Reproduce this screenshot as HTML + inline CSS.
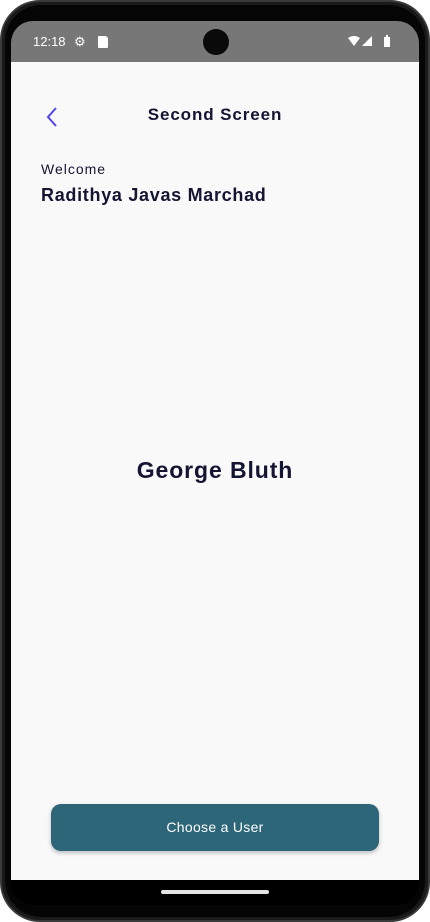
<!DOCTYPE html>
<html><head><style>
*{margin:0;padding:0;box-sizing:border-box}
body{width:430px;height:922px;background:#fff;position:relative;overflow:hidden;font-family:"Liberation Sans",sans-serif}
.phone{position:absolute;left:0;top:0;width:430px;height:922px;background:#1a1a1a;border-radius:40px;border:2px solid #3a3a3a}
.inner{position:absolute;left:5px;top:5px;width:420px;height:912px;background:#050505;border-radius:36px}
.screen{position:absolute;left:11px;top:21px;width:408px;height:884px;border-radius:22px;overflow:hidden;background:#000}
.status{position:absolute;left:0;top:0;width:408px;height:41px;background:#777}
.content{position:absolute;left:0;top:41px;width:408px;height:818px;background:#f9f9f9}
.cam{position:absolute;left:192px;top:8px;width:26px;height:26px;border-radius:50%;background:#0a0a0a}
.st{position:absolute;color:#fff;font-size:13px;top:13px}
.t{position:absolute;color:#141433;font-weight:bold;white-space:nowrap}
.btn{position:absolute;left:40px;top:742px;width:328px;height:47px;background:#2d6579;border-radius:10px;color:#fff;font-size:14px;text-align:center;line-height:46px;box-shadow:0 2px 4px rgba(0,0,0,.25);letter-spacing:0.3px}
.home{position:absolute;left:150px;top:890px;width:108px;height:4px;background:#e5e5e5;border-radius:2px}
</style></head><body>
<div class="phone"></div><div class="inner"></div>
<div class="screen">
<div class="status">
<div class="st" style="left:22px">12:18</div>
<div class="st" style="left:63px;font-size:13px">⚙</div>
<div style="position:absolute;left:87px;top:15px;width:10px;height:12px;background:#fff;border-radius:1px 3px 1px 1px"></div>
<div class="cam"></div>
<svg style="position:absolute;left:336px;top:14px" width="50" height="14"><path d="M1 3 Q7 -1 13 3 L7 11Z" fill="#fff"/><path d="M15 11 L25 1 L25 11Z" fill="#fff"/><rect x="37" y="2" width="6" height="10" fill="#fff"/><rect x="39" y="0" width="2" height="2" fill="#fff"/></svg>
</div>
<div class="content">
<svg style="position:absolute;left:33px;top:44px" width="16" height="22"><path d="M12 2 L4 11 L12 20" stroke="#5046f0" stroke-width="2" fill="none"/></svg>
<div class="t" style="left:0;width:408px;text-align:center;top:43px;font-size:17px;letter-spacing:0.9px">Second Screen</div>
<div class="t" style="left:30px;top:99px;font-size:14px;font-weight:normal;letter-spacing:1px">Welcome</div>
<div class="t" style="left:30px;top:123px;font-size:18px;letter-spacing:0.7px">Radithya Javas Marchad</div>
<div class="t" style="left:0;width:408px;text-align:center;top:395px;font-size:23px;letter-spacing:0.9px">George Bluth</div>
<div class="btn" style="top:742px">Choose a User</div>
</div>
<div class="home" style="top:869px"></div>
</div>
</body></html>
